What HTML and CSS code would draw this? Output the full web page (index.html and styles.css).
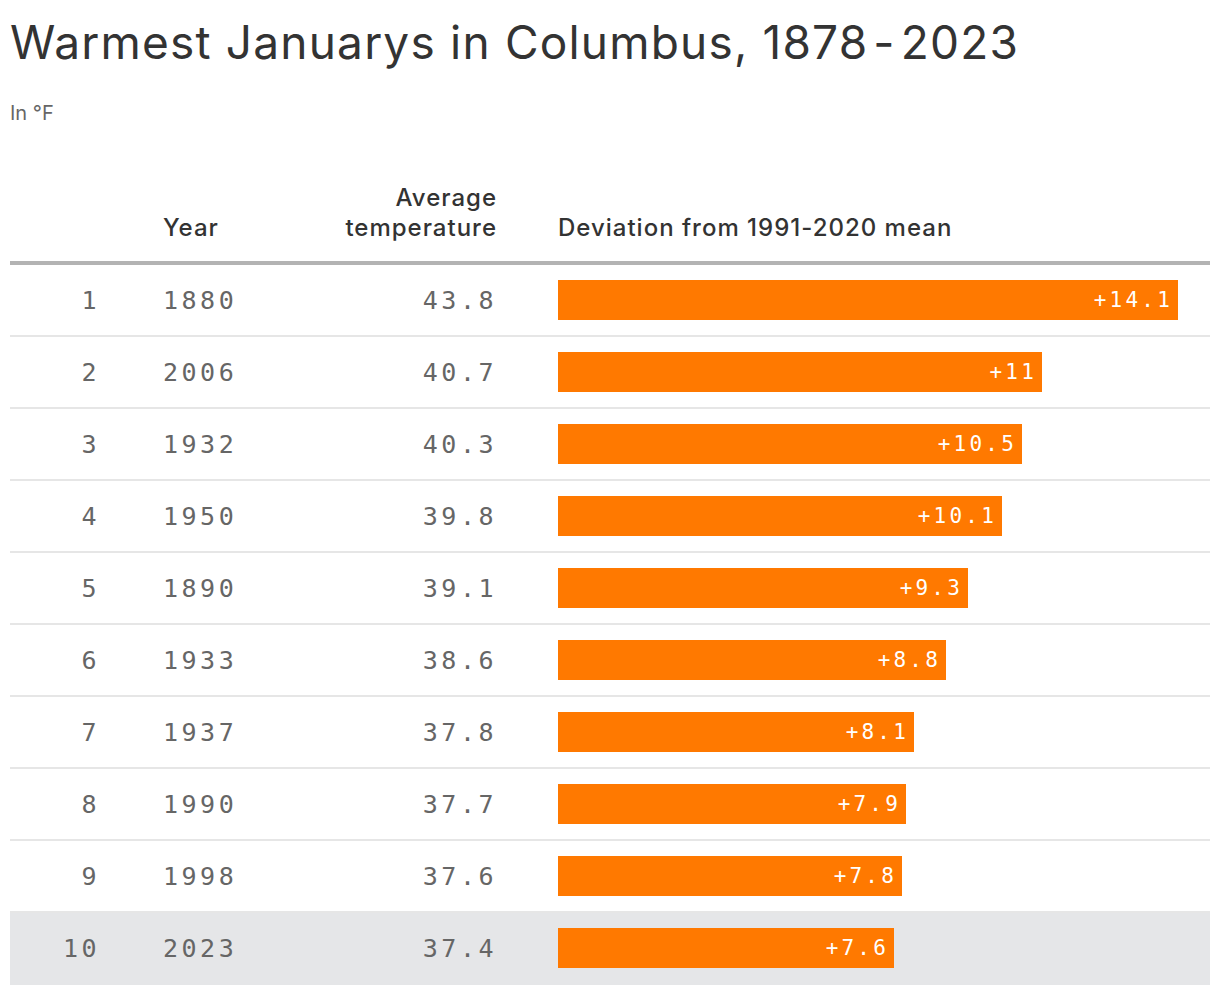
FILE: index.html
```html
<!DOCTYPE html>
<html lang="en">
<head>
<meta charset="utf-8">
<title>Warmest Januarys in Columbus</title>
<link rel="stylesheet" href="styles.css">
</head>
<body>
<div class="chart">
  <h1 class="title">Warmest Januarys in Columbus, 1878<span class="dash">-</span>2023</h1>
  <p class="subtitle">In °F</p>
  <div class="table">
    <div class="row head">
      <div class="cell rank"></div>
      <div class="cell year">Year</div>
      <div class="cell avg">Average<br>temperature</div>
      <div class="cell dev">Deviation from 1991-2020 mean</div>
    </div>
    <div class="row">
      <div class="cell rank"><span class="num">1</span></div>
      <div class="cell year"><span class="num">1880</span></div>
      <div class="cell avg"><span class="num">43.8</span></div>
      <div class="cell dev"><div class="bar" style="width:620px"><span class="lbl">+14.1</span></div></div>
    </div>
    <div class="row">
      <div class="cell rank"><span class="num">2</span></div>
      <div class="cell year"><span class="num">2006</span></div>
      <div class="cell avg"><span class="num">40.7</span></div>
      <div class="cell dev"><div class="bar" style="width:484px"><span class="lbl">+11</span></div></div>
    </div>
    <div class="row">
      <div class="cell rank"><span class="num">3</span></div>
      <div class="cell year"><span class="num">1932</span></div>
      <div class="cell avg"><span class="num">40.3</span></div>
      <div class="cell dev"><div class="bar" style="width:464px"><span class="lbl">+10.5</span></div></div>
    </div>
    <div class="row">
      <div class="cell rank"><span class="num">4</span></div>
      <div class="cell year"><span class="num">1950</span></div>
      <div class="cell avg"><span class="num">39.8</span></div>
      <div class="cell dev"><div class="bar" style="width:444px"><span class="lbl">+10.1</span></div></div>
    </div>
    <div class="row">
      <div class="cell rank"><span class="num">5</span></div>
      <div class="cell year"><span class="num">1890</span></div>
      <div class="cell avg"><span class="num">39.1</span></div>
      <div class="cell dev"><div class="bar" style="width:410px"><span class="lbl">+9.3</span></div></div>
    </div>
    <div class="row">
      <div class="cell rank"><span class="num">6</span></div>
      <div class="cell year"><span class="num">1933</span></div>
      <div class="cell avg"><span class="num">38.6</span></div>
      <div class="cell dev"><div class="bar" style="width:388px"><span class="lbl">+8.8</span></div></div>
    </div>
    <div class="row">
      <div class="cell rank"><span class="num">7</span></div>
      <div class="cell year"><span class="num">1937</span></div>
      <div class="cell avg"><span class="num">37.8</span></div>
      <div class="cell dev"><div class="bar" style="width:356px"><span class="lbl">+8.1</span></div></div>
    </div>
    <div class="row">
      <div class="cell rank"><span class="num">8</span></div>
      <div class="cell year"><span class="num">1990</span></div>
      <div class="cell avg"><span class="num">37.7</span></div>
      <div class="cell dev"><div class="bar" style="width:348px"><span class="lbl">+7.9</span></div></div>
    </div>
    <div class="row">
      <div class="cell rank"><span class="num">9</span></div>
      <div class="cell year"><span class="num">1998</span></div>
      <div class="cell avg"><span class="num">37.6</span></div>
      <div class="cell dev"><div class="bar" style="width:344px"><span class="lbl">+7.8</span></div></div>
    </div>
    <div class="row highlight">
      <div class="cell rank"><span class="num">10</span></div>
      <div class="cell year"><span class="num">2023</span></div>
      <div class="cell avg"><span class="num">37.4</span></div>
      <div class="cell dev"><div class="bar" style="width:336px"><span class="lbl">+7.6</span></div></div>
    </div>
  </div>
</div>
</body>
</html>
```

FILE: styles.css
```css
* { box-sizing: border-box; }

body {
  margin: 0;
  background: #ffffff;
  font-family: Inter, "Liberation Sans", sans-serif;
  color: #333333;
}

.chart {
  padding: 0 10px;
}

.title {
  margin: 14px 0 0 0;
  font-size: 46px;
  line-height: 56px;
  font-weight: 400;
  letter-spacing: 1.2px;
  color: #333333;
}

.title .dash {
  margin: 0 5px;
}

.subtitle {
  margin: 31px 0 0 0;
  font-size: 20px;
  line-height: 24px;
  color: #666666;
}

.table {
  margin-top: 58px;
  display: flex;
  flex-direction: column;
}

.row {
  display: grid;
  grid-template-columns: 90px 200px 197px 1fr;
  align-items: center;
  height: 72px;
  border-bottom: 2px solid #e6e6e6;
}

.row.head {
  height: auto;
  align-items: end;
  padding-bottom: 18px;
  border-bottom: 4px solid #b3b3b3;
  font-size: 24px;
  line-height: 30px;
  font-weight: 500;
  letter-spacing: 1px;
  color: #333333;
}

.row.highlight {
  background: #e5e6e8;
  border-bottom-color: #e5e6e8;
}

.cell.rank { text-align: right; }
.cell.year { padding-left: 63px; }
.cell.avg { text-align: right; }
.cell.dev { padding-left: 61px; }

.num {
  font-family: "DejaVu Sans Mono", "Liberation Mono", monospace;
  font-size: 25px;
  letter-spacing: 3.5px;
  color: #666666;
}

.bar {
  height: 40px;
  background: #ff7900;
  display: flex;
  align-items: center;
  justify-content: flex-end;
  padding-right: 5px;
}

.lbl {
  font-family: "DejaVu Sans Mono", "Liberation Mono", monospace;
  font-size: 21px;
  letter-spacing: 3.2px;
  color: #ffffff;
}
```
